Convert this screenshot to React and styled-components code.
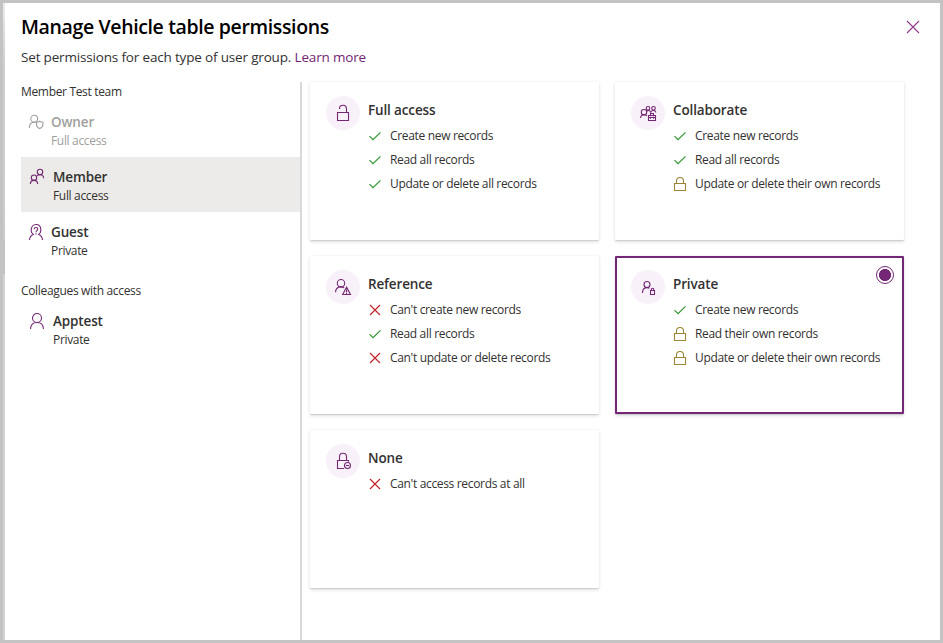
import React from 'react';
import styled, { createGlobalStyle } from 'styled-components';

const purple = '#742774';

const GlobalStyle = createGlobalStyle`
  * {
    box-sizing: border-box;
  }

  body {
    margin: 0;
    font-family: 'Open Sans', 'Noto Sans', sans-serif;
    font-size: 12px;
    letter-spacing: -.33px;
    color: #323130;
  }
`;

const Panel = styled.div`
  display: flex;
  flex-direction: column;
  width: 943px;
  height: 643px;
  padding-left: 16px;
  background: linear-gradient(#ececec, #cfcfcf 60px, #cbcbcb 237px, #c3c3c3 237px, #c3c3c3 271px, #d2d2d2 271px) 0 0 / 2px 100% no-repeat white;
  border: solid #c3c3c3 3px;
`;

const Header = styled.div`
  display: flex;
  justify-content: space-between;
  padding: 8px 20px 0 2px;
  height: 40px;
`;

const Title = styled.h1`
  margin: 0;
  font-size: 19.5px;
  font-weight: 600;
  line-height: 32px;
  letter-spacing: -.37px;
  color: black;
`;

const CloseButton = styled.button`
  width: 14px;
  height: 14px;
  margin-top: 9px;
  padding: 0;
  border: none;
  background: none;
`;

const SubTitle = styled.div`
  height: 39px;
  padding: 2px 0 0 2px;
  font-size: 13.5px;
  line-height: 24px;
  letter-spacing: -.17px;
`;

const Link = styled.a`
  color: ${purple};
`;

const Content = styled.div`
  display: flex;
  flex: 1;
  padding-left: 2px;
`;

const Sidebar = styled.div`
  width: 281px;
  border-right: solid #d9d9d9 2px;
`;

const GroupLabel = styled.div`
  height: 20px;
  line-height: 19px;

  &:not(:first-child) {
    margin-top: 14px;
  }
`;

const Member = styled.div`
  display: flex;
  gap: ${props => (props.$wide ? 8 : 7)}px;
  height: 55px;
  padding: 11px 0 0 ${props => (props.$wide ? 8 : 7)}px;
  background: ${props => (props.$selected ? '#edebe9' : 'none')};
  color: ${props => (props.$disabled ? '#a19f9d' : 'inherit')};
`;

const MemberName = styled.div`
  font-size: 13.5px;
  font-weight: 600;
  line-height: 19px;
  letter-spacing: -.14px;
`;

const MemberAccess = styled.div`
  line-height: 17px;
`;

const Cards = styled.div`
  display: grid;
  grid-template-columns: 289px 289px;
  grid-auto-rows: 158px;
  gap: 16px;
  padding-left: 8px;
`;

const Card = styled.div`
  position: relative;
  display: flex;
  gap: 8px;
  padding: 14px 16px;
  border-radius: 1px;
  box-shadow: 0 1.6px 3.6px rgba(0, 0, 0, .13), 0 .3px .9px rgba(0, 0, 0, .1);
  outline: ${props => (props.$selected ? `solid ${purple} 2px` : 'none')};
  outline-offset: -2px;
`;

const IconCircle = styled.div`
  flex: none;
  width: 34px;
  height: 34px;
  border-radius: 50%;
  background: #f8f1f9;
`;

const CardTitle = styled.div`
  font-size: 13.5px;
  font-weight: 600;
  line-height: 21px;
  letter-spacing: -.14px;
  padding-top: 4px;
  height: 28px;
`;

const Rule = styled.div`
  display: flex;
  align-items: center;
  gap: 8px;
  height: 24px;
  white-space: nowrap;
`;

const RuleText = styled.span`
  height: 24px;
  line-height: 23px;
`;

const Radio = styled.div`
  position: absolute;
  top: 10px;
  right: 10px;
  width: 18px;
  height: 18px;
  border: solid ${purple} 1px;
  border-radius: 50%;
  background: radial-gradient(circle, ${purple} 5.7px, white 6.3px);
`;

const Svg = styled.svg`
  display: block;
  flex: none;
  fill: none;
`;

const Drawing = ({ size = 16, height = size, color = purple, weight = 1.1, children }) => (
  <Svg width={size} height={height} viewBox={`0 0 ${size} ${height}`} stroke={color} strokeWidth={weight}>
    {children}
  </Svg>
);

const OwnerIcon = () => (
  <Drawing color="#a19f9d">
    <circle cx="6.2" cy="5.7" r="3.4" />
    <path d="M1.4 15v-.9C1.600 11.300 3.600 9.200 6.200 9.200c.5 0 .9.1 1.300.2" />
    <path d="M11.700 8.300c-1 .8-1.900 1-3.200 1v2.300c0 2 1.200 3.200 3.200 3.900 2-.7 3.200-1.900 3.200-3.900V9.300c-1.300 0-2.200-.2-3.200-1z" />
  </Drawing>
);

const MembersIcon = () => (
  <Drawing>
    <circle cx="11" cy="4" r="2.700" />
    <circle cx="5" cy="9.700" r="2.700" />
    <path d="M1.300 16c.2-2.300 1.600-3.600 3.700-3.600s3.500 1.300 3.700 3.600M8.200 7.900c.7-.8 1.600-1.200 2.800-1.200 2.100 0 3.500 1.300 3.700 3.600" />
  </Drawing>
);

const GuestIcon = () => (
  <Drawing height={17}>
    <path d="M1.500 17c.2-2.800 1.600-4.700 3.800-5.600A5 5 0 0 1 3.200 6.900C3.200 3.700 5.200 1.500 8 1.500s4.800 2.200 4.800 5.400a5 5 0 0 1-2.100 4.500c2.200.9 3.600 2.800 3.800 5.600" />
    <path d="M6.200 6.200c0-1.100.7-1.700 1.800-1.700s1.800.6 1.800 1.600C9.800 7.400 8 7.500 8 9.200M8 10.300v1.200" />
  </Drawing>
);

const PersonIcon = () => (
  <Drawing height={17}>
    <circle cx="8" cy="6" r="4.500" />
    <path d="M1.500 17c.2-3.900 2.700-6.500 6.500-6.500s6.300 2.600 6.500 6.500" />
  </Drawing>
);

const UnlockedIcon = () => (
  <Drawing size={34}>
    <path d="M11.500 16.500h11v8h-11zM13.500 13v-.3a3.500 3.500 0 0 1 7 0v3.800" />
  </Drawing>
);

const TeamIcon = () => (
  <Drawing size={34}>
    <circle cx="13" cy="16.200" r="2.700" />
    <path d="M9.500 22c.2-2 1.500-3.200 3.500-3.200 1.200 0 2.200.4 2.800 1.200" />
    <circle cx="17" cy="12.300" r="1.800" />
    <circle cx="22.500" cy="12.300" r="1.800" />
    <path d="M15.700 15.300c1.700-1.600 3.200-.8 4 .9.800-1.900 4.600-2.600 5.200.3" />
    <path d="M17.500 19.500h7v5h-7zM19.500 19.500v-2h3v2M17.500 21.500h7M19.500 20.700v2M22.500 20.700v2" />
  </Drawing>
);

const WarningIcon = () => (
  <Drawing size={34}>
    <circle cx="15" cy="13.200" r="3.700" />
    <path d="M9.500 22.300c.2-3.300 2.300-5.400 5.500-5.400 1.200 0 2.300.4 3.200 1" />
    <path d="M20.600 17.200l-3.900 7.300h7.800zM20.600 19.500v3M20.600 23v1" />
  </Drawing>
);

const PrivateIcon = () => (
  <Drawing size={34}>
    <circle cx="16" cy="14.500" r="3" />
    <path d="M11.500 23v-.7c.2-2.700 2-4.700 4.500-4.700 1 0 1.700.2 2.400.6" />
    <path d="M19.500 20.500h4v4h-4zM20.300 20.500v-1a1.200 1.200 0 0 1 2.400 0v1" />
  </Drawing>
);

const BlockedIcon = () => (
  <Drawing size={34}>
    <path d="M18 24.500h-6.500v-8h11v1.200M13.500 16.500v-3.800a3.500 3.500 0 0 1 7 0v3.800" />
    <circle cx="21.500" cy="21.500" r="3" />
    <path d="M20 21.500h3" />
  </Drawing>
);

const ruleIcons = {
  yes: (
    <Drawing size={14} color="#2f942f" weight={1.15}>
      <path d="M1.500 7.200l3.500 3.500 7.500-7.400" />
    </Drawing>
  ),
  no: (
    <Drawing size={14} color="#c32227" weight={1.15}>
      <path d="M2 2l10 10M12 2L2 12" />
    </Drawing>
  ),
  own: (
    <Drawing size={14} color="#9a8435">
      <path d="M1.500 6.500h11v7h-11zM3.500 6.500V4a3.500 3.500 0 0 1 7 0v2.500" />
    </Drawing>
  ),
};

const team = [
  { name: 'Owner', access: 'Full access', icon: <OwnerIcon />, disabled: true },
  { name: 'Member', access: 'Full access', icon: <MembersIcon />, selected: true, wide: true },
  { name: 'Guest', access: 'Private', icon: <GuestIcon /> },
];

const cards = [
  {
    title: 'Full access',
    icon: <UnlockedIcon />,
    rules: [['yes', 'Create new records'], ['yes', 'Read all records'], ['yes', 'Update or delete all records']],
  },
  {
    title: 'Collaborate',
    icon: <TeamIcon />,
    rules: [['yes', 'Create new records'], ['yes', 'Read all records'], ['own', 'Update or delete their own records']],
  },
  {
    title: 'Reference',
    icon: <WarningIcon />,
    rules: [['no', "Can't create new records"], ['yes', 'Read all records'], ['no', "Can't update or delete records"]],
  },
  {
    title: 'Private',
    icon: <PrivateIcon />,
    selected: true,
    rules: [['yes', 'Create new records'], ['own', 'Read their own records'], ['own', 'Update or delete their own records']],
  },
  {
    title: 'None',
    icon: <BlockedIcon />,
    rules: [['no', "Can't access records at all"]],
  },
];

const MemberItem = ({ name, access, icon, selected, disabled, wide }) => (
  <Member $selected={selected} $disabled={disabled} $wide={wide}>
    {icon}
    <div>
      <MemberName>{name}</MemberName>
      <MemberAccess>{access}</MemberAccess>
    </div>
  </Member>
);

class App extends React.PureComponent {
  render() {
    return (
      <Panel>
        <GlobalStyle />
        <Header>
          <Title>Manage Vehicle table permissions</Title>
          <CloseButton aria-label="Close">
            <Drawing size={14} color="#8e3a8e">
              <path d="M1 1l12 12M13 1L1 13" />
            </Drawing>
          </CloseButton>
        </Header>
        <SubTitle>
          Set permissions for each type of user group. <Link>Learn more</Link>
        </SubTitle>
        <Content>
          <Sidebar>
            <GroupLabel>Member Test team</GroupLabel>
            {team.map(member => <MemberItem key={member.name} {...member} />)}
            <GroupLabel>Colleagues with access</GroupLabel>
            <MemberItem name="Apptest" access="Private" icon={<PersonIcon />} wide />
          </Sidebar>
          <Cards>
            {cards.map(card => (
              <Card key={card.title} $selected={card.selected}>
                <IconCircle>{card.icon}</IconCircle>
                <div>
                  <CardTitle>{card.title}</CardTitle>
                  {card.rules.map(([kind, text]) => (
                    <Rule key={text}>
                      {ruleIcons[kind]}
                      <RuleText>{text}</RuleText>
                    </Rule>
                  ))}
                </div>
                {card.selected && <Radio />}
              </Card>
            ))}
          </Cards>
        </Content>
      </Panel>
    );
  }
}

export default App;
